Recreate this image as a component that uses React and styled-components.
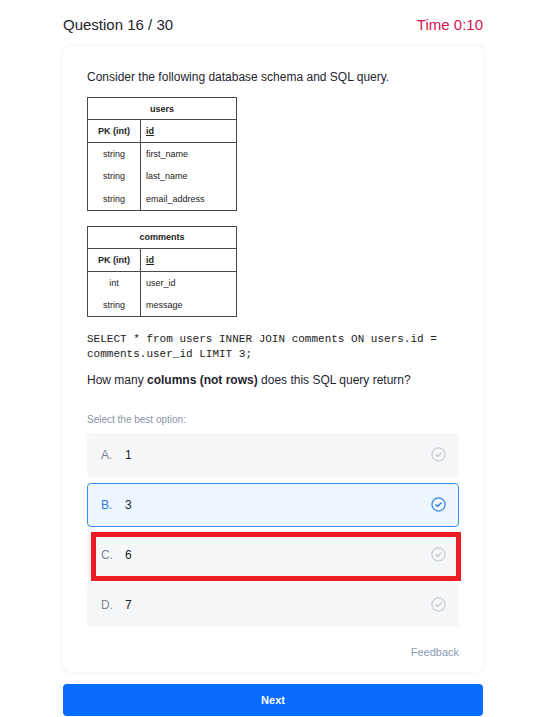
import React from "react";
import styled, { createGlobalStyle } from "styled-components";

const Global = createGlobalStyle`
  html, body { margin: 0; padding: 0; background: #ffffff; }
  body { font-family: "Liberation Sans", Arial, sans-serif; color: #1f2430; }
  * { box-sizing: border-box; }
`;

const Page = styled.div`
  width: 533px;
  padding: 16px 50px 0 63px;
`;

const Header = styled.div`
  display: flex;
  justify-content: space-between;
  align-items: center;
  font-size: 15px;
  line-height: 17px;
  margin-bottom: 13px;
`;

const Title = styled.div`
  color: #1f2430;
`;

const Timer = styled.div`
  color: #d6134f;
`;

const Card = styled.div`
  background: #fff;
  border-radius: 8px;
  box-shadow: 0 0 6px rgba(0, 0, 0, 0.08);
  padding: 24px 24px 13px;
  display: flex;
  flex-direction: column;
`;

const Text = styled.div`
  font-size: 12px;
  line-height: 14px;
  color: #1f2430;
  margin-top: ${(p) => p.$mt || 0}px;
`;

const Schema = styled.table`
  width: 150px;
  border-collapse: collapse;
  border: 1px solid #4a4a4a;
  font-size: 9px;
  color: #222;
  margin-top: ${(p) => p.$mt || 0}px;
`;

const HeadCell = styled.th`
  height: 22px;
  font-weight: bold;
  text-align: center;
  border-bottom: 1px solid #4a4a4a;
  padding: 0;
`;

const KeyRow = styled.tr`
  height: 23px;
  border-bottom: 1px solid #4a4a4a;
`;

const TypeCell = styled.td`
  width: 53px;
  text-align: center;
  border-right: 1px solid #4a4a4a;
  font-weight: ${(p) => (p.$bold ? "bold" : "normal")};
  padding: 0;
  height: ${(p) => p.$h || 22}px;
`;

const NameCell = styled.td`
  padding: 0 0 0 5px;
  font-weight: ${(p) => (p.$bold ? "bold" : "normal")};
  text-decoration: ${(p) => (p.$bold ? "underline" : "none")};
`;

const Code = styled.pre`
  margin: 15px 0 0;
  font-family: "Liberation Mono", "DejaVu Sans Mono", monospace;
  font-size: 11px;
  line-height: 15px;
  color: #222;
  white-space: pre-wrap;
`;

const Hint = styled.div`
  font-size: 10px;
  line-height: 14px;
  color: #8a93a6;
  margin-top: 26px;
`;

const Options = styled.div`
  display: flex;
  flex-direction: column;
  gap: 6px;
  margin-top: 6px;
`;

const Option = styled.div`
  position: relative;
  height: 44px;
  display: flex;
  align-items: center;
  padding: 0 12px 0 13px;
  border-radius: 4px;
  background: ${(p) => (p.$selected ? "#eef6ff" : "#f6f7f9")};
  border: 1px solid ${(p) => (p.$selected ? "#3b8ef0" : "#f6f7f9")};
  font-size: 12px;
`;

const Letter = styled.span`
  width: 24px;
  color: ${(p) => (p.$selected ? "#2f7fe6" : "#7c8494")};
`;

const Value = styled.span`
  flex: 1;
  color: #1f2430;
`;

const Highlight = styled.div`
  position: absolute;
  top: -2px;
  left: 3px;
  right: -3px;
  bottom: -5px;
  border: 5px solid #ec1c24;
  pointer-events: none;
`;

const Feedback = styled.div`
  align-self: flex-end;
  font-size: 11px;
  line-height: 14px;
  color: #8a9bb8;
  margin-top: 18px;
`;

const NextButton = styled.button`
  width: 100%;
  height: 32px;
  margin-top: 12px;
  border: none;
  border-radius: 4px;
  background: #0a6cff;
  color: #fff;
  font-family: "Liberation Sans", Arial, sans-serif;
  font-weight: bold;
  font-size: 11px;
`;

const CheckIcon = ({ active }) => {
  const c = active ? "#2f7fe6" : "#c6ccd8";
  return (
    <svg width="15" height="15" viewBox="0 0 16 16" fill="none">
      <circle cx="8" cy="8" r="7" stroke={c} strokeWidth="1.3" />
      <path d="M5.2 8.2 L7.1 10 L10.8 6.4" stroke={c} strokeWidth="1.5" strokeLinecap="round" strokeLinejoin="round" />
    </svg>
  );
};

const tables = [
  { name: "users", rows: [["string", "first_name"], ["string", "last_name"], ["string", "email_address"]] },
  { name: "comments", rows: [["int", "user_id"], ["string", "message"]] },
];

const options = [
  { l: "A.", v: "1" },
  { l: "B.", v: "3", selected: true },
  { l: "C.", v: "6", marked: true },
  { l: "D.", v: "7" },
];

export default function App() {
  return (
    <Page>
      <Global />
      <Header>
        <Title>Question 16 / 30</Title>
        <Timer>Time 0:10</Timer>
      </Header>
      <Card>
        <Text>Consider the following database schema and SQL query.</Text>
        {tables.map((t, i) => (
          <Schema key={t.name} $mt={i === 0 ? 13 : 15}>
            <thead>
              <tr>
                <HeadCell colSpan={2}>{t.name}</HeadCell>
              </tr>
            </thead>
            <tbody>
              <KeyRow>
                <TypeCell $bold $h={23}>PK (int)</TypeCell>
                <NameCell $bold>id</NameCell>
              </KeyRow>
              {t.rows.map((r) => (
                <tr key={r[1]}>
                  <TypeCell $h={22.5}>{r[0]}</TypeCell>
                  <NameCell>{r[1]}</NameCell>
                </tr>
              ))}
            </tbody>
          </Schema>
        ))}
        <Code>SELECT * from users INNER JOIN comments ON users.id = comments.user_id LIMIT 3;</Code>
        <Text $mt={11}>
          How many <b>columns (not rows)</b> does this SQL query return?
        </Text>
        <Hint>Select the best option:</Hint>
        <Options>
          {options.map((o) => (
            <Option key={o.l} $selected={o.selected}>
              <Letter $selected={o.selected}>{o.l}</Letter>
              <Value>{o.v}</Value>
              <CheckIcon active={o.selected} />
              {o.marked && <Highlight />}
            </Option>
          ))}
        </Options>
        <Feedback>Feedback</Feedback>
      </Card>
      <NextButton>Next</NextButton>
    </Page>
  );
}
